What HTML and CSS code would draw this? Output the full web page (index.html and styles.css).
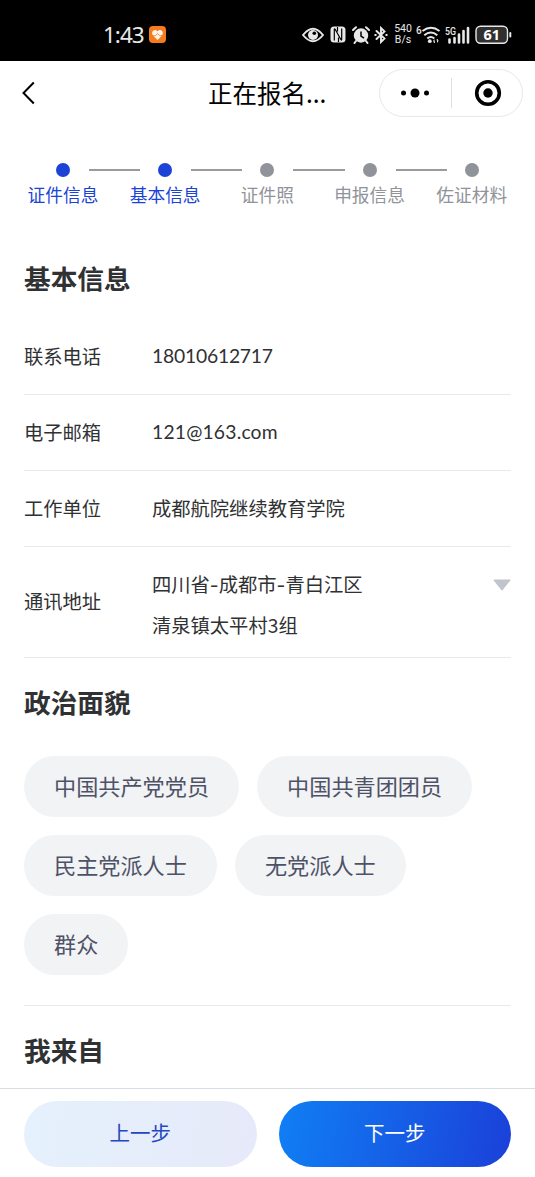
FILE: index.html
```html
<!DOCTYPE html>
<html lang="zh-CN">
<head>
<meta charset="utf-8">
<title>正在报名</title>
<link rel="stylesheet" href="styles.css">
</head>
<body>
<div class="screen">
  <header class="status">
    <span class="clock">1:43</span>
    <svg class="app" width="17" height="17" viewBox="0 0 17 17"><rect width="17" height="17" rx="4" fill="#f47b20"/><path d="M8.500 14 4 9.500C1.800 6.700 4.200 3.300 6.800 4.100L8.500 5.300 10.200 4.100C12.800 3.300 15.200 6.700 13 9.500Z" fill="#fff5e8"/><path d="M3 9.700h3.500L8.500 7.500l2 2.200H14" stroke="#f47b20" stroke-width=".8" fill="none"/></svg>
    <div class="indicators">
      <svg class="eye" width="22" height="16" viewBox="0 0 22 16"><path d="M1 8Q11-4.500 21 8 11 20.500 1 8Z" fill="none" stroke="#e8e8e8" stroke-width="1.900"/><circle cx="11" cy="8" r="5" fill="#e8e8e8"/><circle cx="12.300" cy="6.300" r="1.800" fill="#000"/></svg>
      <svg class="nfc" width="16" height="17" viewBox="0 0 16 17"><rect x=".5" y=".5" width="15" height="16" rx="3.500" fill="#e8e8e8"/><path d="M4.300 14.500V3.500Q4.300 2 5.300 3.500L10.700 13.300Q11.700 15 11.700 13V2.500M7.500 1v4.500M8.500 16v-4.500" stroke="#000" stroke-width="1.200" fill="none"/></svg>
      <svg class="alarm" width="18" height="18" viewBox="0 0 18 18"><circle cx="9" cy="9.500" r="7.200" fill="#e8e8e8"/><path d="M1 4 4 1.200M17 4 14 1.200M4 15l-1.500 2M14 15l1.500 2" stroke="#e8e8e8" stroke-width="2" stroke-linecap="round"/><path d="M9 5.500V10l3 2.200" fill="none" stroke="#000" stroke-width="1.500"/></svg>
      <svg class="bt" width="14" height="18" viewBox="0 0 14 18"><path d="M2.500 5 10.500 12.500 7 16V2l3.500 3.500L2.500 13M1.200 9h.6M12.200 9h.6" fill="none" stroke="#e8e8e8" stroke-width="1.900" stroke-linecap="round"/></svg>
      <span class="speed"><span>540</span><span>B/s</span></span>
      <svg class="wifi" width="25" height="19" viewBox="0 0 25 19"><text x="0" y="8.500" class="tiny">6</text><path d="M6.500 6Q15-.5 23.500 6M8.300 10.300q6.500-5.500 13 0M11.300 13.500q3.500-3 7 0" fill="none" stroke="#e8e8e8" stroke-width="2"/><circle cx="13.800" cy="16.200" r="1.900" fill="#e8e8e8"/><path d="m18.300 14-1.500 2.500h1V18h1.200zM21.300 18l1.500-2.500h-1V14h-1.200z" fill="#e8e8e8"/></svg>
      <svg class="signal" width="26" height="18" viewBox="0 0 26 18"><text x="0" y="8.500" class="tiny" textLength="11" lengthAdjust="spacingAndGlyphs">5G</text><path d="M4.500 16.500v-3M9.500 16.500v-4.500M14 16.500V8.500M18.500 16.500V5M23 16.500V2" stroke="#e8e8e8" stroke-width="2.600" stroke-linecap="round"/></svg>
      <svg class="battery" width="38" height="20" viewBox="0 0 38 20"><rect x="1" y="1.200" width="31.500" height="17" rx="4.500" fill="#303030" stroke="#e8e8e8" stroke-width="1.400"/><path d="M35.300 8v3.500" stroke="#e8e8e8" stroke-width="2" stroke-linecap="round"/><text x="16.700" y="15.200" class="charge">61</text></svg>
    </div>
  </header>
  <nav class="nav">
    <svg class="back" width="14" height="24" viewBox="0 0 14 24"><path d="M12.800 1.500 2.500 12l10.300 10.500" fill="none" stroke="#000" stroke-width="2"/></svg>
    <h1 class="title">正在报名...</h1>
    <div class="capsule">
      <svg class="more" width="30" height="12" viewBox="0 0 30 12"><circle cx="3.500" cy="6" r="2.500"/><circle cx="15" cy="6" r="4.500"/><circle cx="26.500" cy="6" r="2.500"/></svg>
      <i class="divider"></i>
      <svg class="close" width="28" height="28" viewBox="0 0 28 28"><circle cx="14" cy="14" r="11.300" fill="none" stroke="#000" stroke-width="3.600"/><circle cx="14" cy="14" r="4.700"/></svg>
    </div>
  </nav>
  <ol class="steps">
    <li class="step done"><i class="dot"></i><span>证件信息</span></li>
    <li class="line"></li>
    <li class="step done"><i class="dot"></i><span>基本信息</span></li>
    <li class="line"></li>
    <li class="step"><i class="dot"></i><span>证件照</span></li>
    <li class="line"></li>
    <li class="step"><i class="dot"></i><span>申报信息</span></li>
    <li class="line"></li>
    <li class="step"><i class="dot"></i><span>佐证材料</span></li>
  </ol>
  <main class="form">
    <h2 class="heading">基本信息</h2>
    <div class="row"><span class="label">联系电话</span><span class="value latin">18010612717</span></div>
    <div class="row"><span class="label">电子邮箱</span><span class="value latin mail">121@163.com</span></div>
    <div class="row"><span class="label">工作单位</span><span class="value">成都航院继续教育学院</span></div>
    <div class="row address">
      <span class="label">通讯地址</span>
      <div class="value">
        <div class="region"><span>四川省<b class="dash">-</b>成都市<b class="dash">-</b>青白江区</span><svg class="caret" width="18" height="12" viewBox="0 0 18 12"><path d="M1 .5h16q1 0 .3 1L9.700 11q-.7.800-1.400 0L.7 1.500Q0 .5 1 .5Z" fill="#c0c4cc"/></svg></div>
        <div class="village">清泉镇太平村3组</div>
      </div>
    </div>
    <h2 class="heading politics">政治面貌</h2>
    <div class="chips">
      <span class="chip">中国共产党党员</span>
      <span class="chip">中国共青团团员</span>
      <span class="chip">民主党派人士</span>
      <span class="chip">无党派人士</span>
      <span class="chip">群众</span>
    </div>
    <h2 class="heading origin">我来自</h2>
  </main>
  <footer class="actions">
    <button class="btn prev">上一步</button>
    <button class="btn next">下一步</button>
  </footer>
</div>
</body>
</html>
```
FILE: styles.css
```css
* { box-sizing: border-box; }
body { margin: 0; background: #fff; font-family: "Noto Sans CJK SC", sans-serif; color: #303133; }
svg { display: block; flex: none; }
.screen { width: 535px; height: 1177px; display: flex; flex-direction: column; overflow: hidden; }

.status { height: 61px; flex: none; background: #000; color: #e8e8e8; display: flex; align-items: center; padding: 8px 22px 0 103px; }
.clock { width: 46px; font: 22.5px/30px "Noto Sans", sans-serif; letter-spacing: -1px; white-space: nowrap; }
.indicators { margin-left: auto; display: flex; align-items: center; }
.nfc { margin-left: 6px; }
.alarm { margin-left: 6px; }
.bt { margin-left: 4px; }
.speed { margin-left: 5px; width: 20px; display: flex; flex-direction: column; align-items: center; gap: 1px; font: 10.500px/10px Roboto, sans-serif; }
.speed span { display: block; height: 10px; }
.wifi { margin-left: 3px; }
.signal { margin-left: 4px; }
.battery { margin-left: 4px; }
.tiny { font: 500 10px Roboto, sans-serif; fill: #e8e8e8; }
.charge { font: 700 14.500px "Noto Sans", sans-serif; fill: #fff; text-anchor: middle; }

.nav { height: 64px; flex: none; display: flex; align-items: center; padding: 0 12px 0 21px; }
.title { margin: 0 0 1px 173px; font-size: 24.500px; line-height: 36px; font-weight: 400; color: #000; white-space: nowrap; }
.capsule { margin-left: auto; width: 144px; height: 48px; border: 1px solid #e8e8e8; border-radius: 24px; display: flex; align-items: center; }
.more { margin-left: 20px; }
.divider { width: 1px; height: 30px; margin-left: 21px; background: #dfdfdf; }
.close { margin-left: 22px; }

.steps { margin: 38px 0 0; padding: 0 12px; height: 46px; flex: none; list-style: none; display: flex; }
.step { width: 102px; margin-right: -51px; flex: none; display: flex; flex-direction: column; align-items: center; color: #909399; font-size: 17.700px; line-height: 26px; }
.done { color: #1b43d6; }
.dot { width: 14px; height: 14px; margin-bottom: 4px; border-radius: 50%; background: currentColor; }
.line { width: 51.200px; height: 2px; margin-top: 6px; flex: none; background: #999b9f; transform: translateX(26px); }

.form { flex: 1; min-height: 0; padding: 49px 24px 0; }
.heading { margin: 0; font-size: 26.700px; line-height: 40px; font-weight: 700; }
.row { height: 76px; border-bottom: 1px solid #e8e9eb; padding-bottom: 2px; display: flex; align-items: center; font-size: 19.300px; line-height: 42px; }
.heading + .row { margin-top: 21px; }
.label { width: 128px; flex: none; }
.value { flex: 1; }
.latin { padding-top: 1px; font-family: Lato, sans-serif; letter-spacing: -.2px; }
.mail { letter-spacing: .2px; }
.address { height: 111px; }
.address .value { padding-top: 6px; }
.region { display: flex; justify-content: space-between; align-items: center; }
.caret { margin-top: 2px; }
.dash { font-family: Inter, sans-serif; font-weight: 400; line-height: 1; }
.village { line-height: 41px; }
.politics { margin-top: 24px; }
.chips { margin-top: 34px; padding-bottom: 30px; display: flex; flex-wrap: wrap; gap: 18px; border-bottom: 1px solid #e8e9eb; }
.chip { height: 61px; padding: 0 30px; border-radius: 31px; background: #f2f3f5; color: #4e5267; font-size: 22.170px; line-height: 59px; }
.origin { margin-top: 24px; }

.actions { height: 89px; flex: none; border-top: 1px solid #dadce4; padding: 12px 24px 0; display: flex; gap: 22px; }
.btn { flex: 1; height: 66px; border: 0; padding: 0 0 4px; border-radius: 33px; font: 20.500px/30px "Noto Sans CJK SC", sans-serif; }
.prev { color: #2448c0; background: linear-gradient(100deg, #e5f1fd, #e6e9f9); }
.next { color: #fff; background: linear-gradient(100deg, #107ff4, #1b40d9); }
```
